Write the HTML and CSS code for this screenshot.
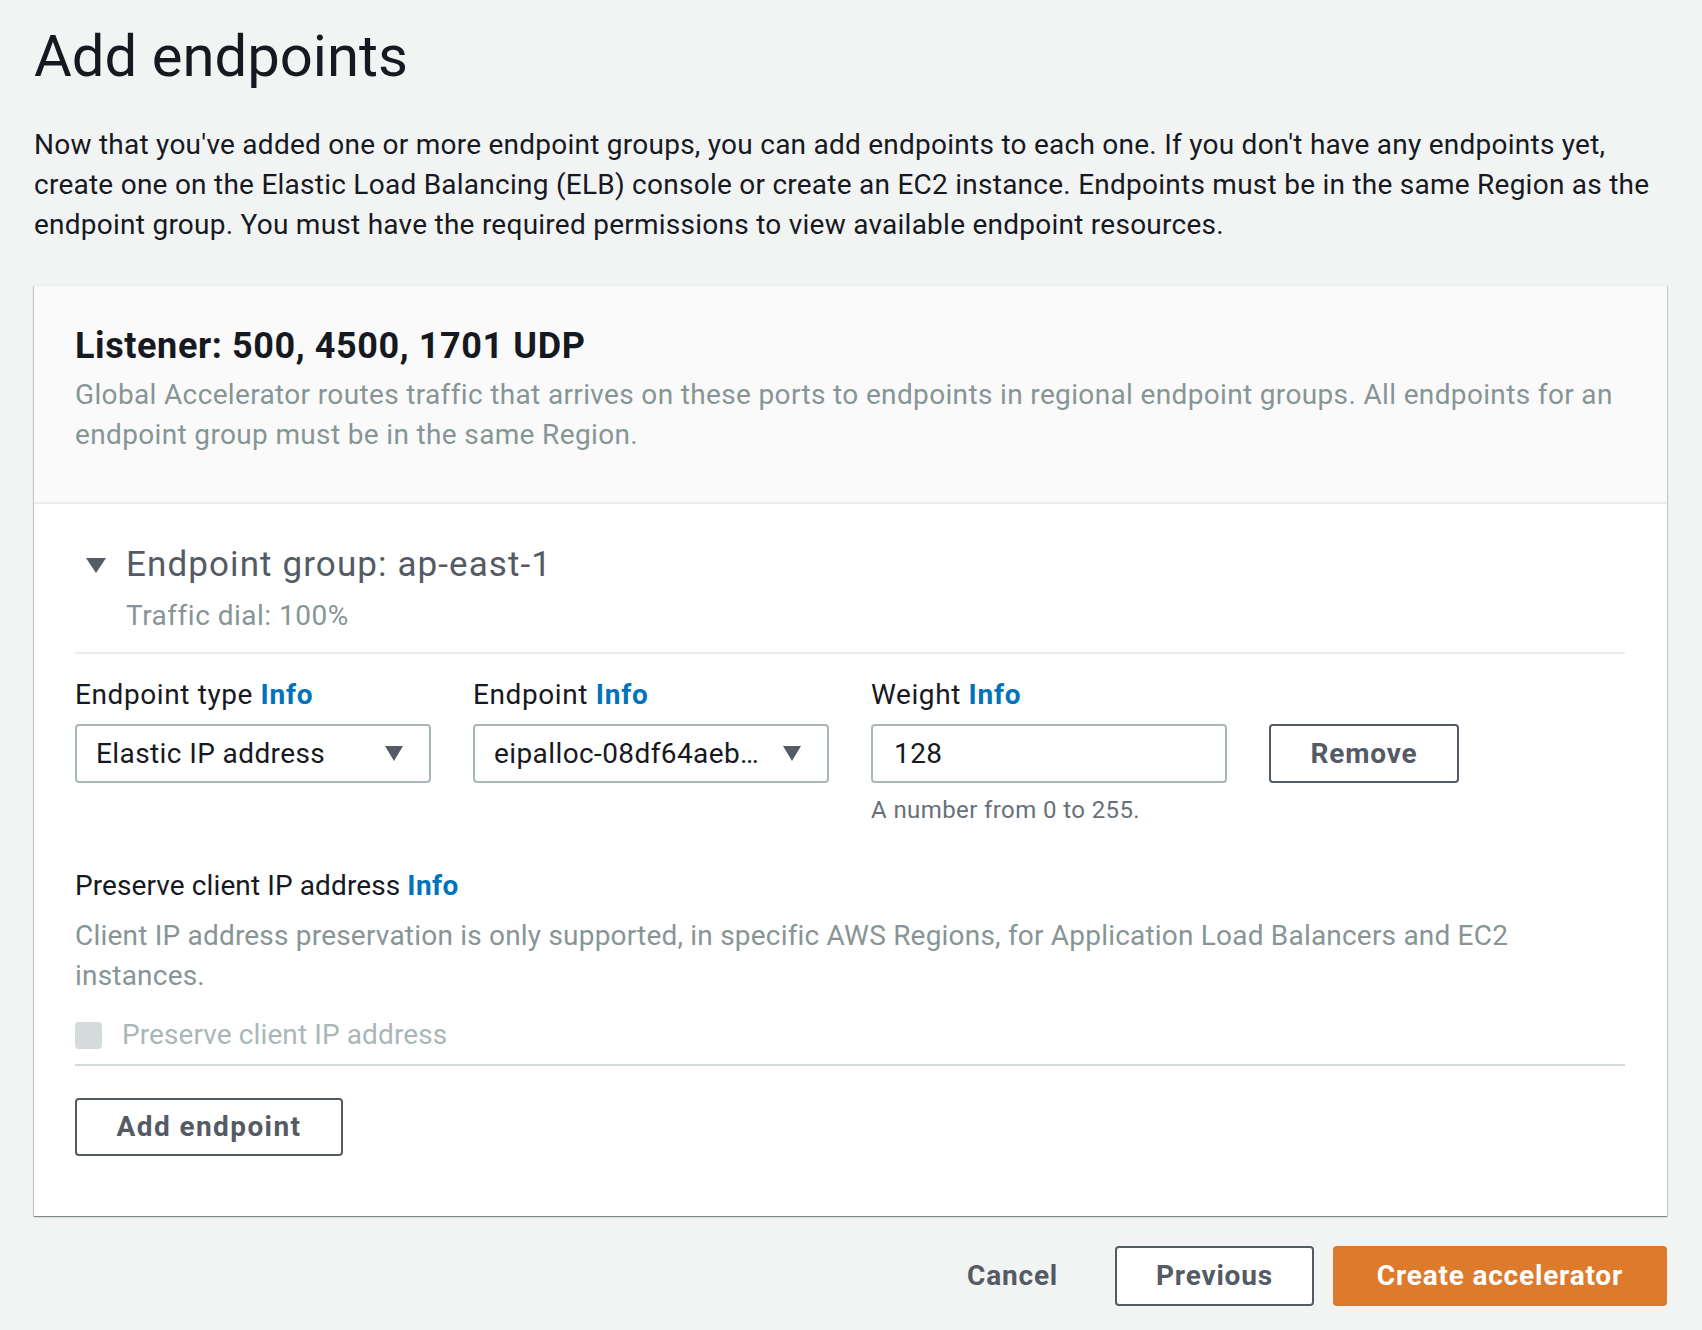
FILE: index.html
```html
<!DOCTYPE html>
<html lang="en">
<head>
<meta charset="utf-8">
<title>Add endpoints</title>
<link rel="stylesheet" href="styles.css">
</head>
<body>
<div class="page">
  <h1 class="page-title">Add endpoints</h1>
  <p class="intro">Now that you've added one or more endpoint groups, you can add endpoints to each one. If you don't have any endpoints yet, create one on the Elastic Load Balancing (ELB) console or create an EC2 instance. Endpoints must be in the same Region as the endpoint group. You must have the required permissions to view available endpoint resources.</p>

  <section class="panel">
    <header class="panel-header">
      <h2 class="panel-title">Listener: 500, 4500, 1701 UDP</h2>
      <p class="panel-desc">Global Accelerator routes traffic that arrives on these ports to endpoints in regional endpoint groups. All endpoints for an endpoint group must be in the same Region.</p>
    </header>

    <div class="panel-body">
      <div class="group-head">
        <svg class="group-caret" width="20" height="15" viewBox="0 0 20 15"><path d="M0 0H20L10 15Z" fill="#545b64"/></svg>
        <div class="group-text">
          <h3 class="group-title">Endpoint group: ap-east-1</h3>
          <div class="group-meta">Traffic dial: 100%</div>
        </div>
      </div>

      <div class="endpoint">
        <div class="endpoint-row">
          <div class="field">
            <div class="field-label">Endpoint type <a class="info">Info</a></div>
            <div class="select">
              <span class="select-value">Elastic IP address</span>
              <svg class="select-caret" width="18" height="15" viewBox="0 0 18 15"><path d="M0 0H18L9 15Z" fill="#545b64"/></svg>
            </div>
          </div>
          <div class="field">
            <div class="field-label">Endpoint <a class="info">Info</a></div>
            <div class="select">
              <span class="select-value">eipalloc-08df64aeb…</span>
              <svg class="select-caret" width="18" height="15" viewBox="0 0 18 15"><path d="M0 0H18L9 15Z" fill="#545b64"/></svg>
            </div>
          </div>
          <div class="field">
            <div class="field-label">Weight <a class="info">Info</a></div>
            <div class="input">128</div>
            <div class="constraint">A number from 0 to 255.</div>
          </div>
          <div class="field field-action">
            <button class="btn btn-remove">Remove</button>
          </div>
        </div>

        <div class="preserve">
          <div class="field-label">Preserve client IP address <a class="info">Info</a></div>
          <p class="field-desc">Client IP address preservation is only supported, in specific AWS Regions, for Application Load Balancers and EC2 instances.</p>
          <label class="checkbox">
            <span class="checkbox-box"></span>
            <span class="checkbox-label">Preserve client IP address</span>
          </label>
        </div>
      </div>

      <button class="btn btn-add">Add endpoint</button>
    </div>
  </section>

  <div class="actions">
    <button class="btn btn-link">Cancel</button>
    <button class="btn btn-normal">Previous</button>
    <button class="btn btn-primary">Create accelerator</button>
  </div>
</div>
</body>
</html>
```
FILE: styles.css
```css
* { box-sizing: border-box; }
html, body { margin: 0; padding: 0; }
body {
  background: #f2f3f3;
  font-family: Roboto, "Liberation Sans", sans-serif;
  font-size: 28px;
  line-height: 40px;
  letter-spacing: 0.4px;
  color: #16191f;
}
.page { padding: 20px 35px 24px 34px; }
.page-title {
  margin: 0;
  font-size: 58px;
  line-height: 72px;
  font-weight: 400;
  letter-spacing: 0;
  color: #16191f;
}
.intro { margin: 33px 0 0; letter-spacing: 0.25px; }

.panel {
  margin-top: 40px;
  background: #fff;
  border-top: 1px solid #eaeded;
  box-shadow: 0 1px 1px 0 rgba(0, 28, 36, .3), 1px 1px 1px 0 rgba(0, 28, 36, .15), -1px 1px 1px 0 rgba(0, 28, 36, .15);
}
.panel-header {
  background: #fafafa;
  border-bottom: 2px solid #eaeded;
  padding: 38px 42px 47px 41px;
}
.panel-title {
  margin: 0;
  font-size: 36px;
  line-height: 44px;
  font-weight: 700;
  letter-spacing: 0.6px;
}
.panel-desc { margin: 7px 0 0; color: #879596; letter-spacing: 0.35px; }

.panel-body { padding: 39px 42px 60px 41px; }

.group-head { display: flex; gap: 20px; align-items: flex-start; padding-left: 11px; }
.group-caret { margin-top: 15px; flex: none; }
.group-title {
  margin: 0;
  font-size: 35px;
  line-height: 44px;
  font-weight: 400;
  letter-spacing: 1.1px;
  color: #545b64;
}
.group-meta { margin-top: 9px; color: #879596; letter-spacing: 0.5px; }

.endpoint {
  margin-top: 16px;
  border-top: 2px solid #eaeded;
  border-bottom: 2px solid #d5dbdb;
  padding: 21px 0 9px;
}
.endpoint-row {
  display: grid;
  grid-template-columns: 356px 356px 356px 190px;
  column-gap: 42px;
  align-items: start;
}
.field-label { line-height: 40px; margin-bottom: 9px; letter-spacing: 0.6px; }
.info { color: #0073bb; font-weight: 700; text-decoration: none; letter-spacing: 0.8px; }

.select, .input {
  height: 59px;
  border: 2px solid #aab7b8;
  border-radius: 4px;
  background: #fff;
  display: flex;
  align-items: center;
  padding: 0 26px 0 19px;
}
.input { padding-left: 21px; }
.select-value {
  flex: 1;
  min-width: 0;
  white-space: nowrap;
  overflow: hidden;
  text-overflow: ellipsis;
}
.select-caret { flex: none; margin-left: 10px; }
.constraint {
  margin-top: 11px;
  font-size: 24px;
  line-height: 32px;
  color: #687078;
}
.field-action { padding-top: 49px; }

.btn {
  font-family: inherit;
  font-size: 28px;
  font-weight: 700;
  line-height: 40px;
  letter-spacing: 0.8px;
  border-radius: 4px;
  border: 2px solid #545b64;
  background: #fff;
  color: #545b64;
  padding: 7px 40px;
  cursor: pointer;
}
.btn-remove { width: 190px; height: 59px; padding: 0; }

.preserve { margin-top: 40px; }
.preserve .field-label { margin-bottom: 0; letter-spacing: 0.1px; }
.preserve .info { letter-spacing: 0.4px; }
.field-desc { margin: 10px 0 0; color: #879596; letter-spacing: 0.2px; }
.checkbox { display: flex; align-items: center; gap: 20px; margin-top: 19px; }
.checkbox-box {
  width: 27px;
  height: 27px;
  border-radius: 4px;
  background: #d5dbdb;
  flex: none;
}
.checkbox-label { color: #aab7b8; letter-spacing: 0.1px; }

.btn-add { margin-top: 32px; height: 58px; width: 268px; padding: 0; letter-spacing: 1.4px; }

.actions {
  display: flex;
  justify-content: flex-end;
  align-items: center;
  gap: 19px;
  margin-top: 30px;
}
.actions .btn { height: 60px; }
.btn-link { border-color: transparent; background: transparent; padding: 0 36px 0 40px; }
.btn-normal { padding: 0 39px; }
.btn-primary {
  background: #dd7a2c;
  border-color: #dd7a2c;
  color: #fff;
  padding: 0 42px;
}
```
